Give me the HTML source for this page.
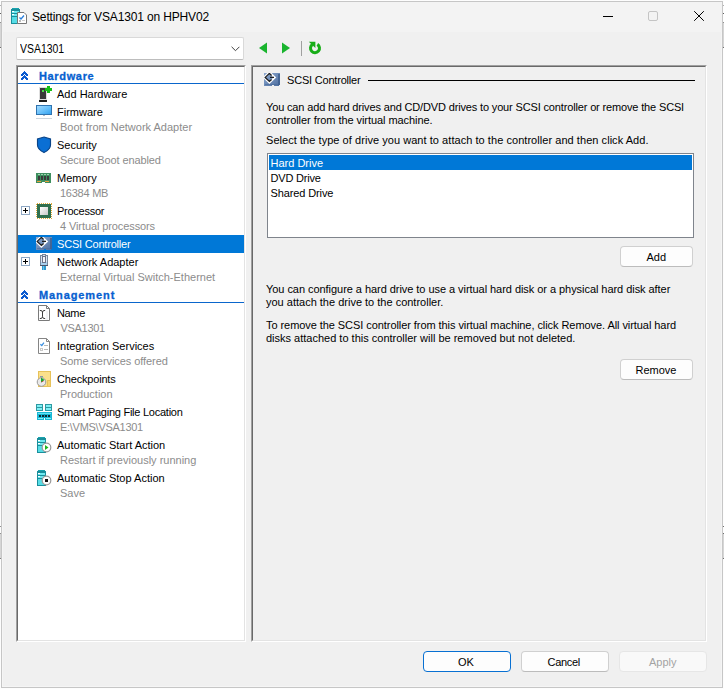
<!DOCTYPE html>
<html><head><meta charset="utf-8">
<style>
*{box-sizing:border-box}
html,body{margin:0;padding:0;width:724px;height:689px;overflow:hidden;background:#fdfdfd;font-family:"Liberation Sans",sans-serif}
.a{position:absolute}
.t{position:absolute;font-size:11px;line-height:13px;white-space:nowrap;color:#000}
.g{color:#8c8c8c}
.h{font-weight:bold;color:#0660d0;-webkit-text-stroke:0.3px #0660d0}
#win{position:absolute;left:1px;top:1px;width:722px;height:687px;border:1px solid #c6c6c6;background:#f0f0f0;box-shadow:inset 0 0 0 1px #f5f5f5}
#title{position:absolute;left:2px;top:2px;width:720px;height:30px;background:#f3f3f3}
.btn{position:absolute;height:21px;border:1px solid #d0d0d0;border-bottom-color:#bcbcbc;border-radius:4px;background:#fdfdfd}
</style></head><body>

<!-- background window marks -->
<div class="a" style="left:0;top:5px;width:1px;height:1px;background:#b0b0b0"></div>
<div class="a" style="left:0;top:13px;width:1px;height:1px;background:#606060"></div>
<div class="a" style="left:0;top:22px;width:1px;height:1px;background:#909090"></div>
<div class="a" style="left:0;top:23px;width:1px;height:24px;background:#d6d6d6"></div>
<div class="a" style="left:0;top:47px;width:1px;height:1px;background:#707070"></div>
<div class="a" style="left:723px;top:5px;width:1px;height:1px;background:#b0b0b0"></div>
<div class="a" style="left:723px;top:13px;width:1px;height:1px;background:#606060"></div>
<div class="a" style="left:723px;top:22px;width:1px;height:1px;background:#909090"></div>
<div class="a" style="left:723px;top:23px;width:1px;height:24px;background:#d6d6d6"></div>
<div class="a" style="left:723px;top:47px;width:1px;height:1px;background:#707070"></div>
<div class="a" style="left:0;top:526px;width:1px;height:1px;background:#909090"></div>
<div class="a" style="left:0;top:533px;width:1px;height:1px;background:#909090"></div>
<div class="a" style="left:0;top:534px;width:1px;height:24px;background:#d6d6d6"></div>
<div class="a" style="left:0;top:558px;width:1px;height:1px;background:#808080"></div>
<div class="a" style="left:723px;top:526px;width:1px;height:1px;background:#707070"></div>
<div class="a" style="left:723px;top:533px;width:1px;height:1px;background:#707070"></div>
<div class="a" style="left:723px;top:534px;width:1px;height:24px;background:#d6d6d6"></div>
<div class="a" style="left:723px;top:558px;width:1px;height:1px;background:#707070"></div>
<div id="win"></div>
<div id="title"></div>

<!-- title -->
<div class="t" style="left:32px;top:10px;font-size:12px;line-height:14px;letter-spacing:-0.15px">Settings for VSA1301 on HPHV02</div>

<!-- window controls -->
<div class="a" style="left:603px;top:16px;width:10px;height:1px;background:#000"></div>
<div class="a" style="left:648px;top:11px;width:10px;height:10px;border:1px solid #c4c4c4;border-radius:2px"></div>
<svg class="a" style="left:694px;top:11px" width="10" height="10"><path d="M0.2 0.2L9.8 9.8M9.8 0.2L0.2 9.8" stroke="#000" stroke-width="1"/></svg>

<!-- combobox -->
<div class="a" style="left:16px;top:37px;width:228px;height:23px;background:#fff;border:1px solid #d9d9d9;border-bottom-color:#bdbdbd;border-radius:2px"></div>
<div class="t" style="left:20px;top:42px;font-size:12px;line-height:14px;transform:scaleX(0.87);transform-origin:0 0">VSA1301</div>
<svg class="a" style="left:231px;top:46px" width="9" height="6"><path d="M0.6 0.8L4.5 4.7L8.4 0.8" stroke="#404040" fill="none" stroke-width="1"/></svg>

<!-- tree panel -->
<div class="a" style="left:16px;top:65px;width:230px;height:577px;background:#fff;border-top:1px solid #a0a0a0;border-left:1px solid #a0a0a0;border-right:1px solid #fff;border-bottom:1px solid #fff"></div>
<div class="a" style="left:17px;top:66px;width:228px;height:575px;border-top:1px solid #696969;border-left:1px solid #696969;border-right:1px solid #e3e3e3;border-bottom:1px solid #e3e3e3"></div>

<!-- right panel -->
<div class="a" style="left:251px;top:65px;width:456px;height:577px;border-top:1px solid #a0a0a0;border-left:1px solid #a0a0a0;border-right:1px solid #fff;border-bottom:1px solid #fff"></div>
<div class="a" style="left:252px;top:66px;width:454px;height:575px;border-top:1px solid #696969;border-left:1px solid #696969;border-right:1px solid #e3e3e3;border-bottom:1px solid #e3e3e3"></div>


<!-- tree content -->
<div class="a" style="left:18px;top:83px;width:226px;height:1px;background:#0a66cc"></div>
<div class="a" style="left:18px;top:302px;width:226px;height:1px;background:#0a66cc"></div>
<div class="a" style="left:18px;top:235px;width:226px;height:18px;background:#0078d7"></div>
<div class="t h" style="left:39px;top:70px;letter-spacing:0.65px">Hardware</div>
<div class="t h" style="left:39px;top:289px;letter-spacing:0.9px">Management</div>
<div class="t" style="left:57px;top:88px">Add Hardware</div>
<div class="t" style="left:57px;top:106px">Firmware</div>
<div class="t g" style="left:60px;top:121px">Boot from Network Adapter</div>
<div class="t" style="left:57px;top:139px">Security</div>
<div class="t g" style="left:60px;top:154px;letter-spacing:-0.1px">Secure Boot enabled</div>
<div class="t" style="left:57px;top:172px">Memory</div>
<div class="t g" style="left:60px;top:187px;letter-spacing:-0.25px">16384 MB</div>
<div class="t" style="left:57px;top:205px;letter-spacing:-0.25px">Processor</div>
<div class="t g" style="left:60px;top:220px;letter-spacing:-0.1px">4 Virtual processors</div>
<div class="t" style="left:57px;top:238px;color:#fff;letter-spacing:-0.2px">SCSI Controller</div>
<div class="t" style="left:57px;top:256px">Network Adapter</div>
<div class="t g" style="left:60px;top:271px">External Virtual Switch-Ethernet</div>
<div class="t" style="left:57px;top:307px;letter-spacing:-0.35px">Name</div>
<div class="t g" style="left:60.5px;top:322px;letter-spacing:-0.3px">VSA1301</div>
<div class="t" style="left:57px;top:340px">Integration Services</div>
<div class="t g" style="left:60px;top:355px;letter-spacing:-0.07px">Some services offered</div>
<div class="t" style="left:57px;top:373px;letter-spacing:-0.18px">Checkpoints</div>
<div class="t g" style="left:60px;top:388px">Production</div>
<div class="t" style="left:57px;top:406px;letter-spacing:-0.25px">Smart Paging File Location</div>
<div class="t g" style="left:60px;top:421px;letter-spacing:-0.28px">E:\VMS\VSA1301</div>
<div class="t" style="left:57px;top:439px">Automatic Start Action</div>
<div class="t g" style="left:60px;top:454px">Restart if previously running</div>
<div class="t" style="left:57px;top:472px">Automatic Stop Action</div>
<div class="t g" style="left:60px;top:487px">Save</div>



<!-- right panel content -->
<div class="t" style="left:287px;top:74px;letter-spacing:-0.2px">SCSI Controller</div>
<div class="a" style="left:368px;top:80px;width:327px;height:1px;background:#000"></div>
<div class="t" style="left:266px;top:101px;letter-spacing:-0.15px">You can add hard drives and CD/DVD drives to your SCSI controller or remove the SCSI</div>
<div class="t" style="left:266px;top:114px;letter-spacing:-0.06px">controller from the virtual machine.</div>
<div class="t" style="left:266px;top:134px;letter-spacing:0.05px">Select the type of drive you want to attach to the controller and then click Add.</div>
<div class="a" style="left:267px;top:153px;width:427px;height:85px;background:#fff;border:1px solid #7f848c"></div>
<div class="a" style="left:269px;top:155px;width:423px;height:15px;background:#0078d7"></div>
<div class="t" style="left:270.5px;top:157px;color:#fff">Hard Drive</div>
<div class="t" style="left:270.5px;top:172px;letter-spacing:-0.2px">DVD Drive</div>
<div class="t" style="left:270.5px;top:187px;letter-spacing:-0.12px">Shared Drive</div>
<div class="btn" style="left:620px;top:246px;width:73px"></div>
<div class="t" style="left:646.5px;top:251px">Add</div>
<div class="t" style="left:266px;top:283px;letter-spacing:-0.05px">You can configure a hard drive to use a virtual hard disk or a physical hard disk after</div>
<div class="t" style="left:266px;top:296px">you attach the drive to the controller.</div>
<div class="t" style="left:266px;top:319px;letter-spacing:-0.065px">To remove the SCSI controller from this virtual machine, click Remove. All virtual hard</div>
<div class="t" style="left:266px;top:332px">disks attached to this controller will be removed but not deleted.</div>
<div class="btn" style="left:620px;top:359px;width:73px"></div>
<div class="t" style="left:635.5px;top:364px">Remove</div>

<!-- icons overlay -->
<svg class="a" style="left:0;top:0" width="724" height="689" shape-rendering="crispEdges">
<defs>
<linearGradient id="gmon" x1="0" y1="0" x2="1" y2="1"><stop offset="0" stop-color="#a9ddff"/><stop offset="0.5" stop-color="#6cc2fb"/><stop offset="1" stop-color="#2e9fee"/></linearGradient>
<linearGradient id="gcard" x1="0" y1="0" x2="1" y2="1"><stop offset="0" stop-color="#8ea9d0"/><stop offset="1" stop-color="#4c6d9e"/></linearGradient>
<linearGradient id="gsil" x1="0" y1="0" x2="1" y2="1"><stop offset="0" stop-color="#ffffff"/><stop offset="1" stop-color="#c8c8c8"/></linearGradient>
<symbol id="chev" viewBox="0 0 7 9">
<path d="M3 0h1v1h1v1h1v1h1v2h-2v-1h-1v-1h-1v1h-1v1h-2v-2h1v-1h1v-1h1z M3 4h1v1h1v1h1v1h1v2h-2v-1h-1v-1h-1v1h-1v1h-2v-2h1v-1h1v-1h1z" fill="#0b5bd0"/>
</symbol>
<symbol id="plusbox" viewBox="0 0 9 9">
<rect x="0.5" y="0.5" width="8" height="8" fill="#fff" stroke="#8fa8c4"/>
<rect x="2" y="4" width="5" height="1" fill="#000"/><rect x="4" y="2" width="1" height="5" fill="#000"/>
</symbol>
<symbol id="scsi" viewBox="0 0 17 14">
<path d="M0 0H16V11L14.5 12.5V13H10V12H8V13H0Z" fill="url(#gcard)"/>
<rect x="14" y="1" width="2" height="11" fill="#3f5f8f" opacity="0.8"/>
<rect x="1" y="11" width="13" height="1" fill="#4a6a9a" opacity="0.6"/>
<path d="M5.4 -0.6L10.8 4.4L5.4 9.6L0 4.4Z" fill="none" stroke="#fff" stroke-width="2" shape-rendering="geometricPrecision"/>
<path d="M7.6 2.4L5.4 0.4L1.2 4.4L5.4 8.4L7.6 6.4M6 4.4H10" fill="none" stroke="#1e1e1e" stroke-width="1.3" shape-rendering="geometricPrecision"/>
</symbol>
<symbol id="server" viewBox="0 0 9 16">
<rect x="0" y="1" width="9" height="15" fill="#1a8f9c"/>
<rect x="1" y="0" width="7" height="1" fill="#1aa3ae"/>
<rect x="1" y="3" width="7" height="2" fill="#6fe9f0"/>
<rect x="1" y="6" width="7" height="2" fill="#6fe9f0"/>
<rect x="1" y="9" width="7" height="6" fill="#56dde6"/>
<rect x="1" y="3" width="2" height="1" fill="#fff"/><rect x="1" y="6" width="2" height="1" fill="#fff"/>
</symbol>
</defs>

<!-- title icon -->
<use href="#server" x="11" y="8" width="9" height="16"/>
<path d="M17.5 12.5H24L26.5 15V23.5H17.5Z" fill="#fff" stroke="#777" shape-rendering="geometricPrecision"/>
<path d="M19.5 17.5L21 19L24 15.5" fill="none" stroke="#2a7fdc" stroke-width="1.3" shape-rendering="geometricPrecision"/>
<rect x="19" y="20" width="2" height="2" fill="#bbb"/><rect x="22" y="20" width="3" height="1" fill="#ccc"/>

<!-- header chevrons -->
<use href="#chev" x="21" y="71" width="7" height="9"/>
<use href="#chev" x="21" y="290" width="7" height="9"/>

<!-- add hardware -->
<rect x="39.5" y="87.5" width="7" height="12" fill="none" stroke="#d0d0d0" opacity="0.7"/>
<rect x="40" y="88" width="6" height="11" fill="#3a3a3a"/>
<rect x="39" y="100" width="8" height="2" fill="#1e1e1e"/>
<rect x="42" y="90" width="2" height="2" fill="#4ddc4d"/>
<rect x="45" y="88" width="7" height="3" fill="#16c016"/>
<rect x="47" y="86" width="3" height="7" fill="#16c016"/>
<!-- firmware -->
<rect x="36.5" y="105.5" width="15" height="9" fill="url(#gmon)" stroke="#2f73b0"/>
<rect x="43" y="115" width="2" height="1" fill="#aab8c6"/>
<rect x="36" y="118" width="16" height="1" fill="#cdd5dd"/>

<!-- security -->
<path d="M44 137L50.5 139V145Q50.5 149.5 44 152.5Q37.5 149.5 37.5 145V139Z" fill="#0a6fd4" stroke="#0a4488" stroke-width="1.15" shape-rendering="geometricPrecision"/>

<!-- memory -->
<rect x="36" y="173" width="15" height="10" fill="#3e8f5f"/>
<rect x="38" y="174" width="2" height="1" fill="#9fd4b0"/><rect x="41" y="174" width="2" height="1" fill="#9fd4b0"/>
<rect x="44" y="174" width="2" height="1" fill="#9fd4b0"/><rect x="47" y="174" width="2" height="1" fill="#9fd4b0"/>
<rect x="37.5" y="176" width="2.2" height="4" fill="#3b3b3b"/>
<rect x="40.5" y="176" width="2.2" height="4" fill="#3b3b3b"/>
<rect x="43.5" y="176" width="2.2" height="4" fill="#3b3b3b"/>
<rect x="46.5" y="176" width="2.2" height="4" fill="#3b3b3b"/>
<rect x="37" y="181" width="4" height="1" fill="#e8a23c"/>
<rect x="45" y="181" width="4" height="1" fill="#e8a23c"/>
<rect x="42" y="182" width="3" height="1" fill="#fff"/>
<!-- processor -->
<use href="#plusbox" x="21" y="206" width="9" height="9"/>
<rect x="37" y="203" width="1" height="1" fill="#e0a838"/><rect x="37" y="218" width="1" height="1" fill="#e0a838"/><rect x="39" y="203" width="1" height="1" fill="#e0a838"/><rect x="39" y="218" width="1" height="1" fill="#e0a838"/><rect x="41" y="203" width="1" height="1" fill="#e0a838"/><rect x="41" y="218" width="1" height="1" fill="#e0a838"/><rect x="43" y="203" width="1" height="1" fill="#e0a838"/><rect x="43" y="218" width="1" height="1" fill="#e0a838"/><rect x="45" y="203" width="1" height="1" fill="#e0a838"/><rect x="45" y="218" width="1" height="1" fill="#e0a838"/><rect x="47" y="203" width="1" height="1" fill="#e0a838"/><rect x="47" y="218" width="1" height="1" fill="#e0a838"/><rect x="49" y="203" width="1" height="1" fill="#e0a838"/><rect x="49" y="218" width="1" height="1" fill="#e0a838"/><rect x="51" y="203" width="1" height="1" fill="#e0a838"/><rect x="51" y="218" width="1" height="1" fill="#e0a838"/><rect x="36" y="204" width="1" height="1" fill="#e0a838"/><rect x="51" y="204" width="1" height="1" fill="#e0a838"/><rect x="36" y="206" width="1" height="1" fill="#e0a838"/><rect x="51" y="206" width="1" height="1" fill="#e0a838"/><rect x="36" y="208" width="1" height="1" fill="#e0a838"/><rect x="51" y="208" width="1" height="1" fill="#e0a838"/><rect x="36" y="210" width="1" height="1" fill="#e0a838"/><rect x="51" y="210" width="1" height="1" fill="#e0a838"/><rect x="36" y="212" width="1" height="1" fill="#e0a838"/><rect x="51" y="212" width="1" height="1" fill="#e0a838"/><rect x="36" y="214" width="1" height="1" fill="#e0a838"/><rect x="51" y="214" width="1" height="1" fill="#e0a838"/><rect x="36" y="216" width="1" height="1" fill="#e0a838"/><rect x="51" y="216" width="1" height="1" fill="#e0a838"/>
<rect x="37" y="204" width="14" height="14" fill="#2f6f4f"/>
<rect x="40" y="207" width="8" height="8" fill="url(#gsil)"/>
<!-- scsi tree -->
<use href="#scsi" x="36" y="237" width="17" height="14"/>

<!-- network adapter -->
<use href="#plusbox" x="21" y="257" width="9" height="9"/>
<path d="M40.5 255.5H42.5V254.5H45.5V255.5H47.5V265.5H40.5Z" fill="#dce6f2" stroke="#7a889c"/>
<rect x="41" y="262" width="6" height="3" fill="#a9d1ef"/>
<rect x="42.5" y="256.5" width="3" height="6" fill="#f4f6fb" stroke="#6b7389"/>
<rect x="40" y="265" width="8" height="1" fill="#4d566a"/>
<rect x="42" y="266" width="4" height="4" fill="#2f9ad0"/>
<rect x="43" y="266" width="1" height="4" fill="#6cc0e8"/>

<!-- name -->
<path d="M38.5 305.5H46.5L49.5 308.5V320.5H38.5Z" fill="#fff" stroke="#7a7a7a" shape-rendering="geometricPrecision"/>
<path d="M46.5 305.5V308.5H49.5" fill="none" stroke="#7a7a7a" shape-rendering="geometricPrecision"/>
<rect x="46" y="311" width="2" height="9" fill="#f1f2f4"/>
<path d="M39.8 310.4Q42.5 310.2 42.5 312.2Q42.5 310.2 45.2 310.4M42.5 312V316.8M39.8 318.6Q42.5 318.8 42.5 316.8Q42.5 318.8 45.2 318.6" fill="none" stroke="#3c3c3c" stroke-width="1" shape-rendering="geometricPrecision"/>
<!-- integration services -->
<path d="M38.5 338.5H46.5L49.5 341.5V353.5H38.5Z" fill="#fff" stroke="#858585" shape-rendering="geometricPrecision"/><path d="M46.5 338.5V341.5H49.5" fill="none" stroke="#858585" shape-rendering="geometricPrecision"/>
<path d="M40.4 344.2L41.8 345.6L43.9 342.6" fill="none" stroke="#3a8fe0" stroke-width="1.3" shape-rendering="geometricPrecision"/>
<rect x="44" y="345" width="4" height="1" fill="#b8b8b8"/>
<rect x="40.5" y="348.5" width="2" height="2" fill="none" stroke="#c8c8c8"/>
<rect x="44" y="349" width="4" height="1" fill="#b8b8b8"/>

<!-- checkpoints -->
<rect x="38.5" y="371.5" width="12" height="15" fill="#fbe08c" stroke="#e7c25a"/>
<rect x="47.5" y="380.5" width="3" height="6" fill="#f7d46e" stroke="#e7c25a"/>
<circle cx="41.5" cy="382" r="4.3" fill="#e9e9e9" stroke="#9a9a9a" shape-rendering="geometricPrecision"/>
<rect x="40" y="376" width="3" height="1" fill="#8a9aa8"/>
<path d="M41 377.5L44.5 380L41 382.5Z" fill="#1aaa2a" shape-rendering="geometricPrecision"/>
<path d="M41.5 382L43.5 381" stroke="#d03030" stroke-width="0.8" shape-rendering="geometricPrecision"/>

<!-- smart paging -->
<rect x="36" y="404" width="7" height="7" fill="#2e9aa3"/>
<rect x="37" y="405" width="5" height="2" fill="#7ff0f5"/><rect x="37" y="408" width="5" height="2" fill="#7ff0f5"/>
<rect x="45" y="404" width="7" height="7" fill="#2e9aa3"/>
<rect x="46" y="405" width="5" height="2" fill="#7ff0f5"/><rect x="46" y="408" width="5" height="2" fill="#7ff0f5"/>
<rect x="37" y="412" width="15" height="8" fill="#19b8d6"/>
<rect x="38" y="413" width="13" height="1" fill="#5fe6f5"/>
<rect x="39" y="415" width="2" height="2" fill="#0a2a30"/><rect x="42" y="415" width="2" height="2" fill="#0a2a30"/>
<rect x="45" y="415" width="2" height="2" fill="#0a2a30"/><rect x="48" y="415" width="2" height="2" fill="#0a2a30"/>
<rect x="38" y="418" width="5" height="1" fill="#7ff0f5"/><rect x="46" y="418" width="5" height="1" fill="#7ff0f5"/><rect x="44" y="418" width="1" height="2" fill="#ffffff"/><rect x="44" y="414" width="1" height="4" fill="#0f9ab6"/>

<!-- auto start -->
<use href="#server" x="37" y="437" width="9" height="16"/>
<circle cx="46.5" cy="447.5" r="4.3" fill="#fff" stroke="#9a9a9a" stroke-width="1.2" shape-rendering="geometricPrecision"/>
<path d="M45 445L48.5 447.5L45 450Z" fill="#1db41d" shape-rendering="geometricPrecision"/>

<!-- auto stop -->
<use href="#server" x="37" y="470" width="9" height="16"/>
<circle cx="46.5" cy="480.5" r="4.3" fill="#fff" stroke="#9a9a9a" stroke-width="1.2" shape-rendering="geometricPrecision"/>
<rect x="45" y="479" width="3" height="3" fill="#111"/>

<!-- nav buttons -->
<path d="M259 48L267 42.5V53.5Z" fill="#19b42e" shape-rendering="geometricPrecision"/>
<path d="M290 48L282 42.5V53.5Z" fill="#19b42e" shape-rendering="geometricPrecision"/>
<rect x="301" y="41" width="1" height="15" fill="#a0a0a0"/>
<path d="M317.38 44.38A4.5 4.5 0 1 1 312.42 44.51" fill="none" stroke="#17ad17" stroke-width="3" shape-rendering="geometricPrecision"/>
<path d="M308.8 41.8H315.4V48Z" fill="#17ad17" shape-rendering="geometricPrecision"/>

<!-- scsi header -->
<use href="#scsi" x="264" y="73" width="17" height="14"/>
</svg>

<!-- bottom buttons -->
<div class="btn" style="left:423px;top:651px;width:88px;border:1px solid #0870d2;"></div>
<div class="t" style="left:458px;top:656px">OK</div>
<div class="btn" style="left:521px;top:651px;width:88px"></div>
<div class="t" style="left:547.5px;top:656px;letter-spacing:-0.3px">Cancel</div>
<div class="btn" style="left:619px;top:651px;width:88px;background:#f9f9f9;border-color:#e6e6e6"></div>
<div class="t" style="left:649px;top:656px;color:#a3a3a3">Apply</div>

</body></html>
